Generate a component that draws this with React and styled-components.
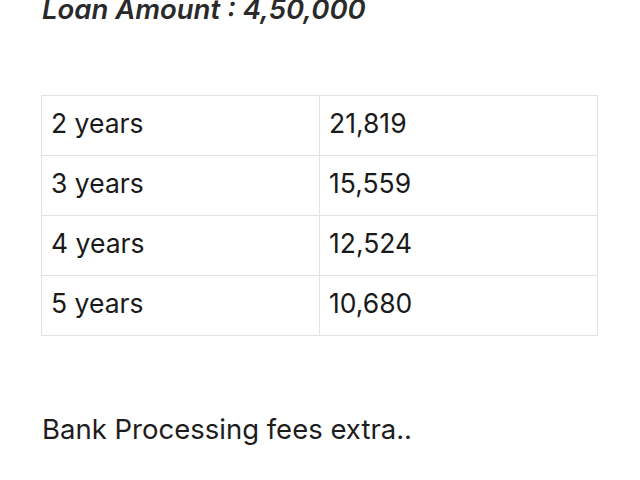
import React from "react";
import styled, { createGlobalStyle } from "styled-components";

const Global = createGlobalStyle`
  html, body { margin: 0; padding: 0; background: #fff; }
  body { width: 640px; height: 480px; overflow: hidden; }
`;

const Page = styled.div`
  padding: 0 42px;
  color: #222;
  font-family: Inter, "Liberation Sans", sans-serif;
`;

const Title = styled.h2`
  margin: -7px 0 0 0;
  font-family: Inter, "Liberation Sans", sans-serif;
  font-style: italic;
  font-weight: 600;
  font-size: 27.5px;
  line-height: 32px;
  color: #2a2a2a;
`;

const Table = styled.table`
  margin: 70px 0 0 -1px;
  width: 557px;
  border-collapse: collapse;
  font-family: Inter, "Open Sans", sans-serif;
`;

const Cell = styled.td`
  border: 1px solid #e2e2e2;
  height: 54px;
  padding: 0 0 5px 9px;
  font-size: 26.5px;
  color: #1a1a1a;
  width: ${(p) => p.$w || "auto"};
  vertical-align: middle;
`;

const Note = styled.p`
  margin: 76px 0 0 0;
  font-size: 27.5px;
  color: #1d1d1d;
  font-family: Inter, "Liberation Sans", sans-serif;
`;

const rows = [
  ["2 years", "21,819"],
  ["3 years", "15,559"],
  ["4 years", "12,524"],
  ["5 years", "10,680"],
];

export default function App() {
  return (
    <>
      <Global />
      <Page>
        <Title>Loan Amount : 4,50,000</Title>
        <Table>
          <tbody>
            {rows.map(([y, v]) => (
              <tr key={y}>
                <Cell $w="268px">{y}</Cell>
                <Cell>{v}</Cell>
              </tr>
            ))}
          </tbody>
        </Table>
        <Note>Bank Processing fees extra..</Note>
      </Page>
    </>
  );
}
